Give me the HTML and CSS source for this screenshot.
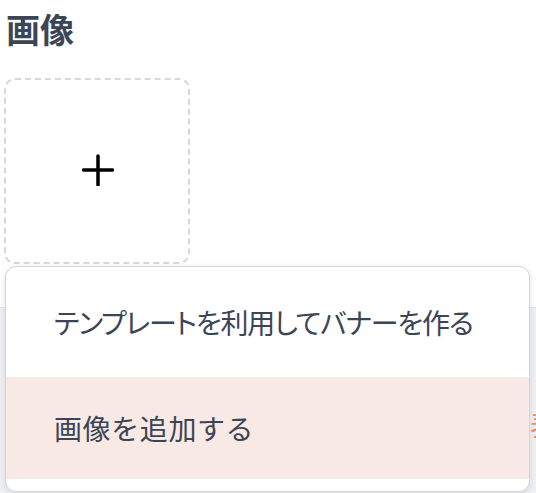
FILE: index.html
```html
<!DOCTYPE html>
<html lang="ja">
<head>
    <meta charset="UTF-8">
    <meta name="viewport" content="width=device-width, initial-scale=1.0">
    <title>画像</title>
    <link rel="stylesheet" href="styles.css">
</head>
<body>

    <div class="field">
        <h2 class="field-title">画像</h2>
        <div class="uploader">
            <svg class="plus" width="32" height="32" viewBox="0 0 32 32">
                <path d="M16 2v29M1.5 16h29" stroke="#000" stroke-width="3.5" stroke-linecap="round" fill="none"/>
            </svg>
        </div>
    </div>

    <div class="below">
        <span class="below-link">表示</span>
    </div>

    <ul class="menu">
        <li class="menu-item kana">テンプレートを利用してバナーを作る</li>
        <li class="menu-item active">画像を追加する</li>
    </ul>

</body>
</html>
```

FILE: styles.css
```css
body { margin: 0; background: #fff; font-family: "Noto Sans CJK JP", "Noto Sans", sans-serif; color: #3b4556; position: relative; height: 493px; overflow: hidden; }
.field { padding: 7px 0 0 4px; }
.field-title { margin: 0 0 0 2px; font-size: 34px; line-height: 44px; font-weight: 700; color: #3b4556; }
.uploader { margin-top: 27px; width: 182px; height: 182px; border: 2px dashed #d6d8dc; border-radius: 11px; display: flex; align-items: center; justify-content: center; }
.plus { margin-left: 2px; margin-top: -2px; }
.below { margin-top: 43px; height: 200px; background: #eef0f2; border-top: 1px solid #e3e5e8; position: relative; overflow: hidden; }
.below-link { position: absolute; left: 530px; top: 96px; color: #f08a66; font-size: 28px; white-space: nowrap; }
.menu { position: absolute; left: 5px; top: 266px; width: 523px; margin: 0; padding: 0 0 12px; list-style: none; background: #fff; border: 1px solid #d3d6db; border-radius: 11px; box-shadow: 0 2px 6px rgba(40, 50, 70, 0.12); overflow: hidden; }
.menu-item { height: 102px; display: flex; align-items: center; padding-left: 48px; font-size: 28px; white-space: nowrap; letter-spacing: 0.6px; }
.menu-item.kana { height: 110px; font-feature-settings: "palt"; letter-spacing: -1.2px; }
.menu-item.active { background: #f9e9e5; }
```
